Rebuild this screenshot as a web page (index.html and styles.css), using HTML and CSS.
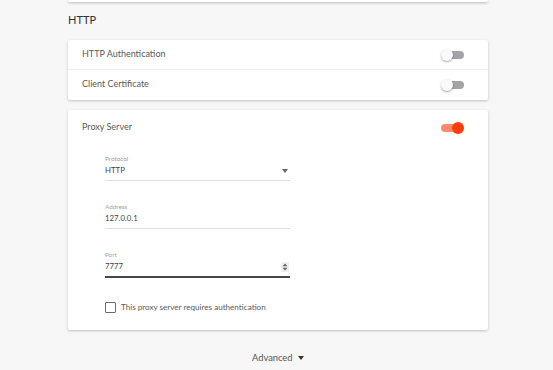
FILE: index.html
```html
<!DOCTYPE html>
<html lang="en">
<head>
  <meta charset="UTF-8">
  <title>Proxy Settings</title>
  <link rel="stylesheet" href="styles.css">
</head>
<body>
  <div class="page">
    <div class="card card-top"></div>

    <h2 class="section-title">HTTP</h2>

    <div class="card">
      <div class="row">
        <span class="row-label">HTTP Authentication</span>
        <span class="toggle"><span class="track"></span><span class="thumb"></span></span>
      </div>
      <div class="row">
        <span class="row-label">Client Certificate</span>
        <span class="toggle"><span class="track"></span><span class="thumb"></span></span>
      </div>
    </div>

    <div class="card card-proxy">
      <div class="proxy-head">
        <span class="row-label">Proxy Server</span>
        <span class="toggle on"><span class="track"></span><span class="thumb"></span></span>
      </div>

      <div class="fields">
        <div class="field">
          <div class="field-label">Protocol</div>
          <div class="field-value">
            <span>HTTP</span>
            <span class="caret"></span>
          </div>
        </div>

        <div class="field">
          <div class="field-label">Address</div>
          <div class="field-value"><span>127.0.0.1</span></div>
        </div>

        <div class="field focused">
          <div class="field-label">Port</div>
          <div class="field-value">
            <span>7777</span>
            <span class="spinner">
              <svg width="6" height="8" viewBox="0 0 6 8"><path d="M3 0.5 L5.5 3.3 H0.5 Z M3 7.5 L5.5 4.7 H0.5 Z" fill="#666"/></svg>
            </span>
          </div>
        </div>

        <label class="check">
          <span class="box"></span>
          <span>This proxy server requires authentication</span>
        </label>
      </div>
    </div>

    <div class="advanced">Advanced <span class="caret dark"></span></div>
  </div>
</body>
</html>
```

FILE: styles.css
```css
body {
  margin: 0;
  background: #f7f7f7;
  font-family: 'Lato', 'Liberation Sans', sans-serif;
  color: #555;
  overflow: hidden;
}
.page {
  width: 420px;
  margin-left: 68px;
}
.card {
  background: #fff;
  border-radius: 2px;
  box-shadow: 0 1px 3px rgba(0,0,0,0.22);
}
.card-top {
  height: 2px;
  border-radius: 0 0 2px 2px;
  box-shadow: 0 1px 3px rgba(0,0,0,0.3);
}
/* Заголовок секции */
.section-title {
  margin: 0;
  padding: 11px 0 14px 0;
  font-size: 11px;
  line-height: 13px;
  font-weight: 400;
  color: #333;
}
.row {
  display: flex;
  align-items: center;
  justify-content: space-between;
  height: 29px;
  padding: 0 24px 0 14px;
  border-bottom: 1px solid #efefef;
}
.row:last-child {
  border-bottom: none;
  height: 30px;
}
.row-label {
  font-size: 9px;
  line-height: 14px;
  color: #5a5a5a;
  padding-bottom: 2px;
}
/* Переключатель */
.toggle {
  position: relative;
  width: 23px;
  height: 12px;
  display: inline-block;
}
.toggle .track {
  position: absolute;
  left: 3px;
  right: 0;
  top: 2px;
  height: 8px;
  border-radius: 4px;
  background: #a3a3a8;
}
.toggle .thumb {
  position: absolute;
  left: 0;
  top: 0;
  width: 12px;
  height: 12px;
  border-radius: 50%;
  background: #fafafa;
  box-shadow: 0 1px 2px rgba(0,0,0,0.35);
}
.toggle.on .track {
  left: 0;
  right: 3px;
  background: #ff8a6b;
}
.toggle.on .thumb {
  left: 11px;
  background: #ff3d0a;
  box-shadow: none;
}
.card-proxy {
  margin-top: 10px;
  padding: 11px 0 17px 0;
}
.proxy-head {
  display: flex;
  align-items: center;
  justify-content: space-between;
  padding: 0 24px 0 14px;
  height: 14px;
}
.fields {
  padding: 20px 0 0 37px;
}
.field {
  width: 185px;
  margin-bottom: 22px;
  border-bottom: 1px solid #dedede;
}
.field.focused {
  border-bottom: 2px solid #47474d;
  margin-bottom: 24px;
}
.field-label {
  font-size: 6.3px;
  line-height: 8px;
  color: #a0a0a0;
}
.field-value {
  display: flex;
  align-items: center;
  justify-content: space-between;
  font-size: 7.8px;
  line-height: 15px;
  padding-bottom: 2px;
  color: #444;
}
.caret {
  width: 0;
  height: 0;
  border-left: 3.5px solid transparent;
  border-right: 3.5px solid transparent;
  border-top: 4px solid #666;
  margin-right: 2px;
}
.caret.dark {
  display: inline-block;
  vertical-align: middle;
  margin: 0 0 2px 3px;
  border-top-color: #333;
}
.spinner {
  display: flex;
  align-items: center;
  justify-content: center;
  width: 8px;
  height: 10px;
  background: #f0f0f0;
  margin-right: 1px;
}
.check {
  display: flex;
  align-items: center;
  gap: 5px;
  font-size: 8.1px;
  line-height: 11px;
  color: #5a5a5a;
}
.check .box {
  width: 9px;
  height: 9px;
  border: 1px solid #6a6a70;
  border-radius: 1px;
  box-sizing: content-box;
}
.advanced {
  text-align: center;
  margin-top: 22px;
  font-size: 9.3px;
  line-height: 12px;
  color: #555;
}
```
